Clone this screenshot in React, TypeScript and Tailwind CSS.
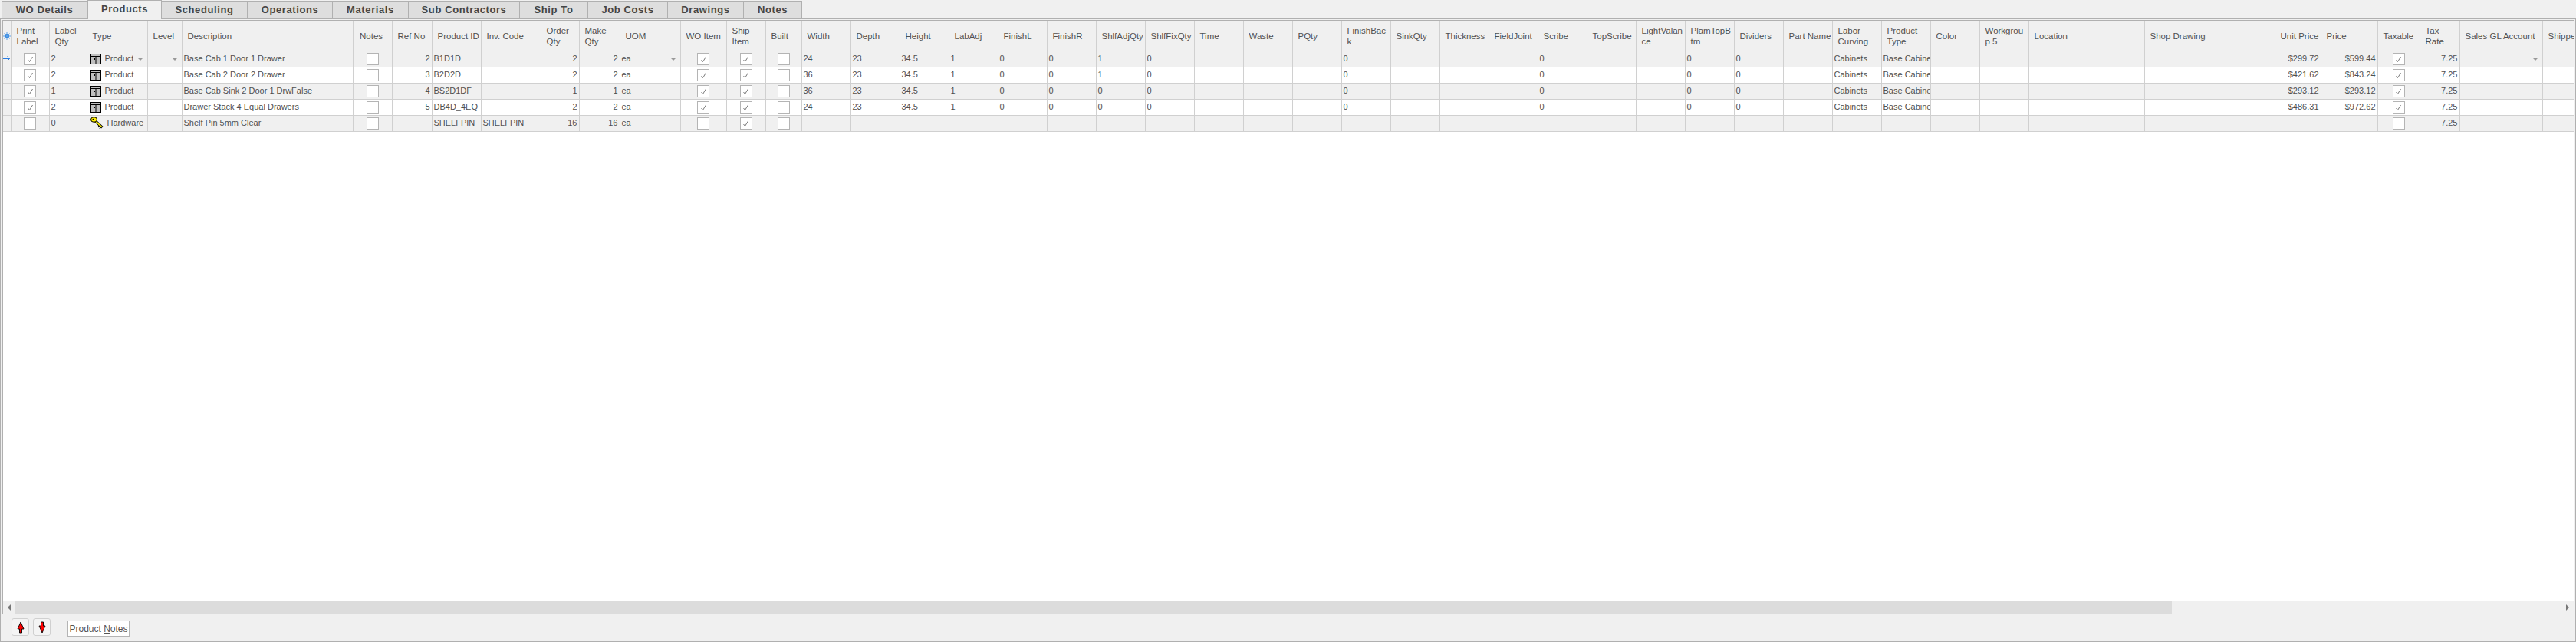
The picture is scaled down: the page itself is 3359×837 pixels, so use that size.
import React from 'react';

const tabs = ['WO Details', 'Products', 'Scheduling', 'Operations', 'Materials', 'Sub Contractors', 'Ship To', 'Job Costs', 'Drawings', 'Notes'];
const tabWidths = [112, 97, 112, 111, 99, 145, 89, 104, 99, 76];

type Align = 'l' | 'r' | 'c';
type Col = { key: string; label: string[]; w: number; align?: Align };

const columns: Col[] = [
  { key: 'print', label: ['Print', 'Label'], w: 50, align: 'c' },
  { key: 'labelQty', label: ['Label', 'Qty'], w: 49 },
  { key: 'type', label: ['Type'], w: 79 },
  { key: 'level', label: ['Level'], w: 45 },
  { key: 'desc', label: ['Description'], w: 224 },
  { key: 'notes', label: ['Notes'], w: 50, align: 'c' },
  { key: 'ref', label: ['Ref No'], w: 52, align: 'r' },
  { key: 'pid', label: ['Product ID'], w: 64 },
  { key: 'inv', label: ['Inv. Code'], w: 78 },
  { key: 'order', label: ['Order', 'Qty'], w: 50, align: 'r' },
  { key: 'make', label: ['Make', 'Qty'], w: 53, align: 'r' },
  { key: 'uom', label: ['UOM'], w: 79 },
  { key: 'wo', label: ['WO Item'], w: 60, align: 'c' },
  { key: 'ship', label: ['Ship', 'Item'], w: 51, align: 'c' },
  { key: 'built', label: ['Built'], w: 47, align: 'c' },
  { key: 'width', label: ['Width'], w: 64 },
  { key: 'depth', label: ['Depth'], w: 64 },
  { key: 'height', label: ['Height'], w: 64 },
  { key: 'labadj', label: ['LabAdj'], w: 64 },
  { key: 'finl', label: ['FinishL'], w: 64 },
  { key: 'finr', label: ['FinishR'], w: 64 },
  { key: 'adj', label: ['ShlfAdjQty'], w: 64 },
  { key: 'fix', label: ['ShlfFixQty'], w: 64 },
  { key: 'time', label: ['Time'], w: 64 },
  { key: 'waste', label: ['Waste'], w: 64 },
  { key: 'pqty', label: ['PQty'], w: 64 },
  { key: 'back', label: ['FinishBac', 'k'], w: 64 },
  { key: 'sink', label: ['SinkQty'], w: 64 },
  { key: 'thick', label: ['Thickness'], w: 64 },
  { key: 'joint', label: ['FieldJoint'], w: 64 },
  { key: 'scribe', label: ['Scribe'], w: 64 },
  { key: 'top', label: ['TopScribe'], w: 64 },
  { key: 'light', label: ['LightValan', 'ce'], w: 64 },
  { key: 'plam', label: ['PlamTopB', 'tm'], w: 64 },
  { key: 'div', label: ['Dividers'], w: 64 },
  { key: 'part', label: ['Part Name'], w: 64 },
  { key: 'curv', label: ['Labor', 'Curving'], w: 64 },
  { key: 'ptype', label: ['Product', 'Type'], w: 64 },
  { key: 'color', label: ['Color'], w: 64 },
  { key: 'wg', label: ['Workgrou', 'p 5'], w: 64 },
  { key: 'loc', label: ['Location'], w: 151 },
  { key: 'shop', label: ['Shop Drawing'], w: 170 },
  { key: 'unit', label: ['Unit Price'], w: 60, align: 'r' },
  { key: 'price', label: ['Price'], w: 74, align: 'r' },
  { key: 'tax', label: ['Taxable'], w: 55, align: 'c' },
  { key: 'rate', label: ['Tax', 'Rate'], w: 52, align: 'r' },
  { key: 'gl', label: ['Sales GL Account'], w: 108 },
  { key: 'shipped', label: ['Shipped'], w: 44 },
];

type Row = Record<string, string | boolean>;

const common: Row = {
  depth: '23', height: '34.5', labadj: '1', finl: '0', finr: '0', back: '0', scribe: '0', plam: '0', div: '0',
  curv: 'Cabinets', ptype: 'Base Cabinets', type: 'Product', uom: 'ea', rate: '7.25', print: true, wo: true, ship: true, tax: true,
};

const rows: Row[] = [
  { ...common, labelQty: '2', desc: 'Base Cab 1 Door 1 Drawer', ref: '2', pid: 'B1D1D', order: '2', make: '2', width: '24', adj: '1', fix: '0', unit: '$299.72', price: '$599.44' },
  { ...common, labelQty: '2', desc: 'Base Cab 2 Door 2 Drawer', ref: '3', pid: 'B2D2D', order: '2', make: '2', width: '36', adj: '1', fix: '0', unit: '$421.62', price: '$843.24' },
  { ...common, labelQty: '1', desc: 'Base Cab Sink 2 Door 1 DrwFalse', ref: '4', pid: 'BS2D1DF', order: '1', make: '1', width: '36', adj: '0', fix: '0', unit: '$293.12', price: '$293.12' },
  { ...common, labelQty: '2', desc: 'Drawer Stack 4 Equal Drawers', ref: '5', pid: 'DB4D_4EQ', order: '2', make: '2', width: '24', adj: '0', fix: '0', unit: '$486.31', price: '$972.62' },
  { labelQty: '0', type: 'Hardware', desc: 'Shelf Pin 5mm Clear', pid: 'SHELFPIN', inv: 'SHELFPIN', order: '16', make: '16', uom: 'ea', ship: true, rate: '7.25' },
];

const CabinetIcon = () => (
  <svg width="14" height="14" viewBox="0 0 14 14" className="shrink-0">
    <rect x="0.5" y="0.5" width="13" height="13" fill="#c0c0c0" stroke="#000" />
    <path d="M1 3.500H13M7 3.500V13" stroke="#000" fill="none" />
    <path d="M5.500 6V8M8.500 6V8" stroke="#000" fill="none" />
  </svg>
);

const KeyIcon = () => (
  <svg width="17" height="17" viewBox="0 0 17 17" className="shrink-0">
    <path d="M7 6.500 14 13" stroke="#000" strokeWidth="3.600" strokeLinecap="square" />
    <path d="M7 6.500 14 13" stroke="#f4e800" strokeWidth="1.800" strokeLinecap="square" />
    <path d="M11 12 10 14M13 14 12 16" stroke="#000" strokeWidth="1.200" />
    <ellipse cx="4.500" cy="4" rx="4" ry="3.300" fill="#ffee00" stroke="#000" />
    <ellipse cx="3.500" cy="3.500" rx="1" ry="0.800" fill="#000" />
  </svg>
);

const Check = ({ checked }: { checked?: boolean }) => (
  <span className="inline-flex w-4 h-4 items-center justify-center bg-white border border-[#b4b4b4] align-middle">
    {checked && (
      <svg width="9" height="9" viewBox="0 0 9 9">
        <path d="M1.500 5 3.500 7.500 7.500 1" stroke="#777" strokeWidth="1" fill="none" />
      </svg>
    )}
  </span>
);

const DropArrow = () => <span className="absolute top-[9px] right-[6px] w-0 h-0 border-x-[3px] border-x-transparent border-t-[3px] border-t-[#999]" />;

const RedArrow = ({ down }: { down?: boolean }) => (
  <svg width="10" height="16" viewBox="0 0 10 16" className={down ? 'rotate-180' : ''}>
    <path d="M5 1 9 10H6.500V15H3.500V10H1z" fill="#ff0000" stroke="#000" strokeWidth="0.900" />
  </svg>
);

const cellText = (col: Col, value: string | boolean | undefined, rowIndex: number) => {
  if (col.align === 'c') {
    return <Check checked={value === true} />;
  }
  if (col.key === 'type') {
    return (
      <div className="flex items-center gap-[5px] pl-[4px]">
        {value === 'Hardware' ? <KeyIcon /> : <CabinetIcon />}
        <span className={rowIndex === 0 ? 'w-[37px] overflow-hidden whitespace-nowrap' : 'whitespace-nowrap'}>{value as string}</span>
      </div>
    );
  }
  return <div className="overflow-hidden whitespace-nowrap px-[2px]">{value as string}</div>;
};

const App: React.FC = () => {
  const dropCols = ['type', 'level', 'uom', 'gl'];

  return (
    <div className="w-[3359px] h-[837px] overflow-hidden bg-[#f0f0f0] flex flex-col text-[#505050] text-[11px] font-['Liberation_Sans',sans-serif] border-b border-[#b0b0b0]">
      {/* Tab strip */}
      <div className="flex h-[25px] items-end pl-[2px] shrink-0 border-b border-[#b0b0b0]">
        {tabs.map((tab, i) =>
          tab === 'Products' ? (
            <div key={tab} style={{ width: tabWidths[i] }} className="h-[25px] mb-[-1px] pb-[3px] bg-[#f0f0f0] border border-b-0 border-[#b0b0b0] flex items-center justify-center font-bold text-[13px] tracking-[0.6px] text-[#454545]">
              {tab}
            </div>
          ) : (
            <div key={tab} style={{ width: tabWidths[i] }} className="h-[23px] bg-[#dedede] border-t border-r border-[#b0b0b0] first:border-l flex items-center justify-center font-bold text-[13px] tracking-[0.6px] text-[#454545]">
              {tab}
            </div>
          ),
        )}
      </div>

      <div className="flex-1 min-h-0 flex flex-col pl-[2px] pr-px border-l border-r border-[#b0b0b0]">
        {/* Grid */}
        <div className="flex-1 min-h-0 mt-px bg-white border-t border-x border-[#b0b0b0] overflow-hidden pt-px">
          <table className="table-fixed border-collapse w-[3355px]">
            <colgroup>
              <col className="w-[10px]" />
              {columns.map(c => (
                <col key={c.key} style={{ width: c.w }} />
              ))}
            </colgroup>
            <thead>
              <tr className="h-[38px] bg-[#f0f0f0] text-[11.5px]">
                <th className="border border-[#d0d0d0] border-l-0 border-t-0 p-0">
                  <svg width="10" height="10" viewBox="0 0 10 10" className="mx-auto">
                    <circle cx="5" cy="5" r="3" fill="#1874d8" />
                    <path d="M5 0V10M0 5H10M1.500 1.500 8.500 8.500M8.500 1.500 1.500 8.500" stroke="#5aa0e8" strokeWidth="1" />
                  </svg>
                </th>
                {columns.map(c => (
                  <th key={c.key} className={`border border-t-0 border-[#d0d0d0] font-normal text-left pl-[7px] pr-0 py-0 leading-[14px] overflow-hidden whitespace-nowrap ${c.key === 'notes' ? 'border-l-[2px] border-l-[#d0d0d0]' : ''}`}>
                    {c.label.map(line => (
                      <div key={line}>{line}</div>
                    ))}
                  </th>
                ))}
              </tr>
            </thead>
            <tbody>
              {rows.map((row, r) => (
                <tr key={r} className={`h-[21px] ${r % 2 === 0 ? 'bg-[#f0f0f0]' : 'bg-white'}`}>
                  <td className="border border-l-0 border-[#d0d0d0] bg-[#f0f0f0] p-0 text-center">
                    {r === 0 && (
                      <svg width="10" height="9" viewBox="0 0 10 9" className="mx-auto">
                        <path d="M0 4.500H8.500M5.500 1.500 8.500 4.500 5.500 7.500" stroke="#2a7de1" strokeWidth="1" fill="none" />
                      </svg>
                    )}
                  </td>
                  {columns.map(c => (
                    <td
                      key={c.key}
                      className={`relative border border-[#d0d0d0] p-0 ${c.align === 'c' ? 'text-center' : c.align === 'r' ? 'text-right' : 'text-left'} ${c.key === 'notes' ? 'border-l-[2px] border-l-[#d0d0d0]' : ''}`}
                    >
                      {cellText(c, row[c.key], r)}
                      {r === 0 && dropCols.includes(c.key) && <DropArrow />}
                    </td>
                  ))}
                </tr>
              ))}
            </tbody>
          </table>
        </div>

        {/* Horizontal scroll bar */}
        <div className="h-[17px] shrink-0 flex bg-[#f0f0f0] border-b border-x border-[#b0b0b0] box-content">
          <div className="w-[16px] flex items-center justify-center">
            <span className="w-0 h-0 border-y-[4px] border-y-transparent border-r-[4px] border-r-[#777]" />
          </div>
          <div className="w-[2812px] bg-[#dcdcdc]" />
          <div className="flex-1" />
          <div className="w-[16px] flex items-center justify-center">
            <span className="w-0 h-0 border-y-[4px] border-y-transparent border-l-[4px] border-l-[#777]" />
          </div>
        </div>

        {/* Footer buttons */}
        <div className="h-[35px] shrink-0 flex items-start pt-[5px] pl-[12px]">
          <button className="w-[23px] h-[23px] flex items-center justify-center bg-[#f4f4f4] border border-[#d0d0d0] rounded-[3px]">
            <RedArrow />
          </button>
          <button className="w-[23px] h-[23px] ml-[5px] flex items-center justify-center bg-[#f4f4f4] border border-[#d0d0d0] rounded-[3px]">
            <RedArrow down />
          </button>
          <button className="w-[81px] h-[21px] ml-[22px] mt-[3px] bg-white border border-[#b4b4b4] text-[12px] text-[#555]">
            Product <span className="underline">N</span>otes
          </button>
        </div>
      </div>
    </div>
  );
};

export default App;
